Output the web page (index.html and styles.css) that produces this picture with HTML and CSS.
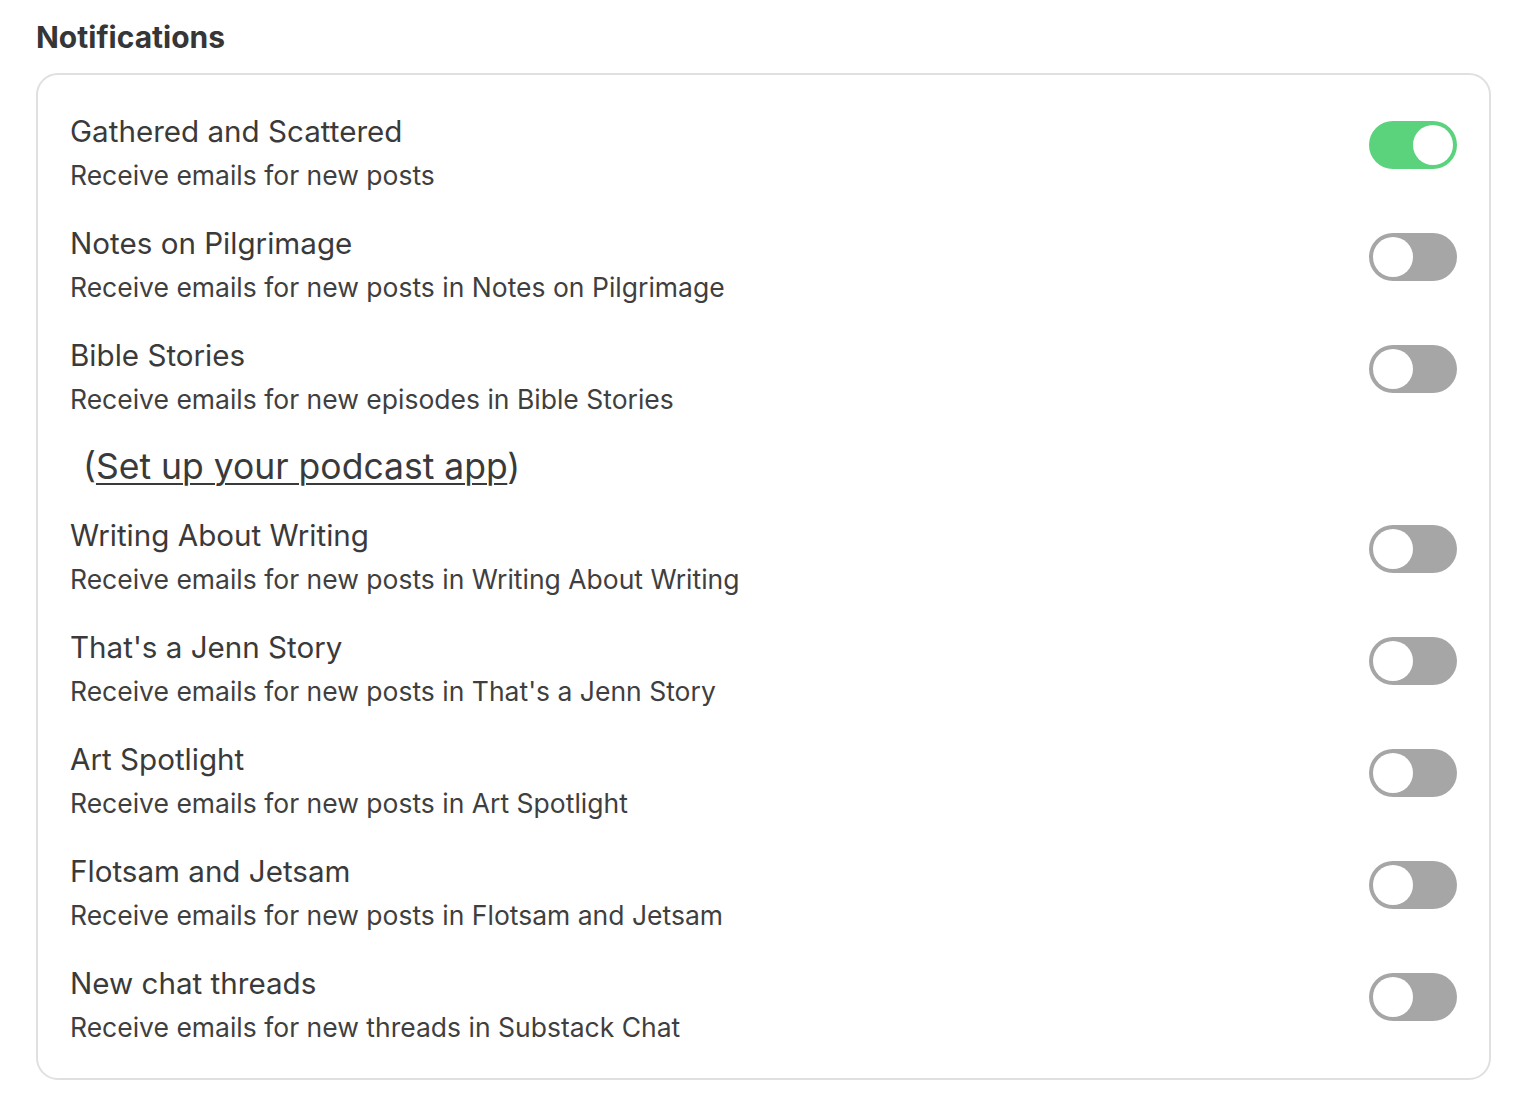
FILE: index.html
```html
<!DOCTYPE html>
<html>
<head>
<meta charset="utf-8">
<link rel="stylesheet" href="styles.css">
</head>
<body>
<div class="page">
  <h2 class="heading">Notifications</h2>
  <div class="card">
    <div class="row">
      <div class="text">
        <div class="title">Gathered and Scattered</div>
        <div class="sub">Receive emails for new posts</div>
      </div>
      <span class="toggle on"><span class="knob"></span></span>
    </div>
    <div class="row">
      <div class="text">
        <div class="title">Notes on Pilgrimage</div>
        <div class="sub">Receive emails for new posts in Notes on Pilgrimage</div>
      </div>
      <span class="toggle"><span class="knob"></span></span>
    </div>
    <div class="row">
      <div class="text">
        <div class="title">Bible Stories</div>
        <div class="sub">Receive emails for new episodes in Bible Stories</div>
      </div>
      <span class="toggle"><span class="knob"></span></span>
    </div>
    <div class="podcast">(<a href="#" class="podcast-link">Set up your podcast app</a>)</div>
    <div class="row">
      <div class="text">
        <div class="title">Writing About Writing</div>
        <div class="sub">Receive emails for new posts in Writing About Writing</div>
      </div>
      <span class="toggle"><span class="knob"></span></span>
    </div>
    <div class="row">
      <div class="text">
        <div class="title">That's a Jenn Story</div>
        <div class="sub">Receive emails for new posts in That's a Jenn Story</div>
      </div>
      <span class="toggle"><span class="knob"></span></span>
    </div>
    <div class="row">
      <div class="text">
        <div class="title">Art Spotlight</div>
        <div class="sub">Receive emails for new posts in Art Spotlight</div>
      </div>
      <span class="toggle"><span class="knob"></span></span>
    </div>
    <div class="row">
      <div class="text">
        <div class="title">Flotsam and Jetsam</div>
        <div class="sub">Receive emails for new posts in Flotsam and Jetsam</div>
      </div>
      <span class="toggle"><span class="knob"></span></span>
    </div>
    <div class="row">
      <div class="text">
        <div class="title">New chat threads</div>
        <div class="sub">Receive emails for new threads in Substack Chat</div>
      </div>
      <span class="toggle"><span class="knob"></span></span>
    </div>
  </div>
</div>
</body>
</html>
```
FILE: styles.css
```css
html, body {
  margin: 0;
  padding: 0;
  background: #ffffff;
}
body {
  font-family: Inter, "Noto Sans", "Liberation Sans", sans-serif;
  color: #3d3d3d;
}
.page {
  padding: 17px 33px 0 36px;
}
.heading {
  margin: 0 0 16px 0;
  font-size: 30px;
  line-height: 40px;
  font-weight: 700;
  color: #363636;
}
.card {
  border: 2px solid #e0e0e0;
  border-radius: 22px;
  padding: 34px 32px 29px 32px;
  display: flex;
  flex-direction: column;
  gap: 24px;
}
.row {
  display: flex;
  justify-content: space-between;
  align-items: flex-start;
}
.text {
  display: flex;
  flex-direction: column;
}
.title {
  font-size: 29.6px;
  line-height: 44px;
  color: #3a3a3a;
}
.sub {
  font-size: 26.5px;
  line-height: 44px;
  color: #3f3f3f;
}
.toggle {
  margin-top: 12px;
  width: 88px;
  height: 48px;
  border-radius: 24px;
  background: #a6a6a6;
  box-sizing: border-box;
  padding: 4px;
  display: flex;
  justify-content: flex-start;
  flex-shrink: 0;
}
.toggle.on {
  background: #5bd27c;
  justify-content: flex-end;
}
.knob {
  width: 40px;
  height: 40px;
  border-radius: 50%;
  background: #ffffff;
}
.podcast {
  font-size: 35.5px;
  line-height: 44px;
  padding-left: 13px;
  color: #3a3a3a;
}
.podcast-link {
  color: #3a3a3a;
  text-decoration: underline;
  text-decoration-thickness: 2px;
  text-underline-offset: 4px;
}
```
